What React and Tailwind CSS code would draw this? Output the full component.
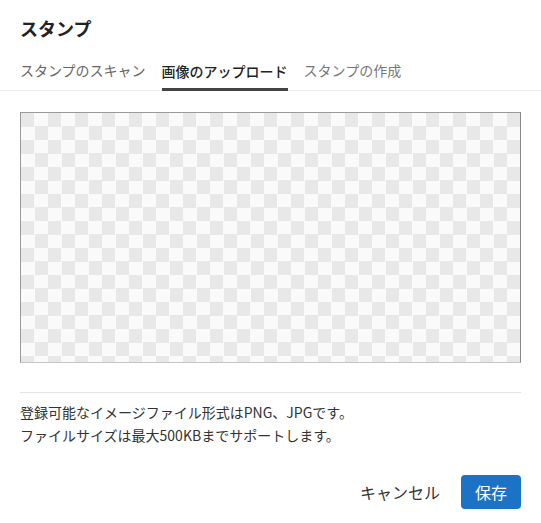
import React from 'react';

const font = { fontFamily: '"Noto Sans CJK JP", "Noto Sans", sans-serif' };

export default function App() {
  return (
    <div className="w-[541px] h-[523px] bg-white text-[#333] flex flex-col" style={font}>
      {/* header */}
      <div className="px-5 pt-[13px]">
        <h2 className="text-[18px] font-bold leading-[30px] text-[#222]">スタンプ</h2>
      </div>

      {/* tabs */}
      <div className="mt-[17px] border-b border-[#ececec] px-5 flex gap-[16px] text-[14px]">
        <button className="pb-[7px] leading-[20px] text-[#666] border-b-[3px] border-transparent">スタンプのスキャン</button>
        <button className="pb-[7px] leading-[20px] text-[#222] font-medium border-b-[3px] border-[#444] -mb-px">画像のアップロード</button>
        <button className="pb-[7px] leading-[20px] text-[#777] border-b-[3px] border-transparent">スタンプの作成</button>
      </div>

      {/* preview area */}
      <div className="px-5 pt-[21px]">
        <div className="h-[251px] border border-[#c4c4c4] border-t-[#9a9a9a] border-l-[#9a9a9a] border-r-[#888] bg-[#fafafa] bg-[conic-gradient(#fafafa_25%,#e8e8e8_0_50%,#fafafa_0_75%,#e8e8e8_0)] bg-[length:27px_27px]" />
      </div>

      {/* info */}
      <div className="px-5 pt-[29px]">
        <div className="border-t border-[#e4e4e4] pt-[8px] text-[14px] leading-[23px] text-[#333]">
          <p>登録可能なイメージファイル形式はPNG、JPGです。</p>
          <p>ファイルサイズは最大500KBまでサポートします。</p>
        </div>
      </div>

      {/* actions */}
      <div className="px-5 pt-[28px] flex justify-end items-center gap-[21px]">
        <button className="text-[16px] text-[#333]">キャンセル</button>
        <button className="h-[34px] px-[14px] rounded-[4px] bg-[#1c72c4] text-white text-[16px]">保存</button>
      </div>
    </div>
  );
}
